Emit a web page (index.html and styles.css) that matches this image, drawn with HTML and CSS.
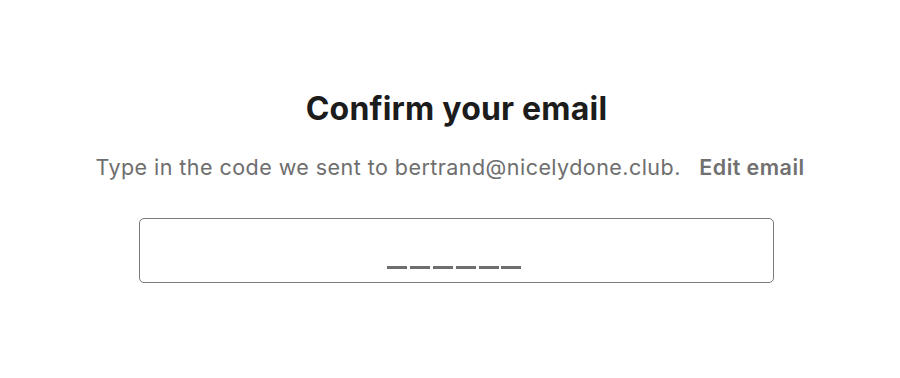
FILE: index.html
```html
<!DOCTYPE html>
<html lang="en">
<head>
<meta charset="utf-8">
<title>Confirm your email</title>
<link rel="stylesheet" href="styles.css">
</head>
<body>
<main class="page">
  <section class="confirm">
    <h1 class="title">Confirm your email</h1>
    <p class="subtitle">Type in the code we sent to bertrand@nicelydone.club. <a class="edit" href="#">Edit email</a></p>
    <div class="code-box" role="group" aria-label="Verification code">
      <span class="slot"></span>
      <span class="slot"></span>
      <span class="slot"></span>
      <span class="slot"></span>
      <span class="slot"></span>
      <span class="slot"></span>
    </div>
  </section>
</main>
</body>
</html>
```
FILE: styles.css
```css
* { box-sizing: border-box; }
html, body { margin: 0; padding: 0; background: #fff; }
body {
  font-family: Inter, "Noto Sans", "Liberation Sans", sans-serif;
  color: #1a1a1a;
}
.page {
  width: 900px;
  height: 378px;
  display: flex;
  justify-content: center;
  padding-top: 89px;
  padding-left: 13px;
}
.confirm {
  display: flex;
  flex-direction: column;
  align-items: center;
}
.title {
  margin: 0;
  font-size: 32px;
  font-weight: 700;
  line-height: 40px;
  letter-spacing: 0.2px;
  color: #1c1c1c;
}
.subtitle {
  margin: 23px 0 0 -13px;
  font-size: 21.5px;
  line-height: 30px;
  letter-spacing: 0.45px;
  color: #6e6e6e;
  white-space: pre;
}
.edit {
  margin-left: 12px;
  color: #707070;
  font-weight: 600;
  text-decoration: none;
}
.code-box {
  margin-top: 36px;
  width: 635px;
  height: 65px;
  border: 1px solid #7a7a7a;
  border-radius: 5px;
  display: flex;
  justify-content: center;
  align-items: flex-end;
  gap: 2.8px;
  padding: 0 4px 13px 0;
}
.slot {
  width: 20px;
  height: 3px;
  background: #6e6e6e;
}
```
